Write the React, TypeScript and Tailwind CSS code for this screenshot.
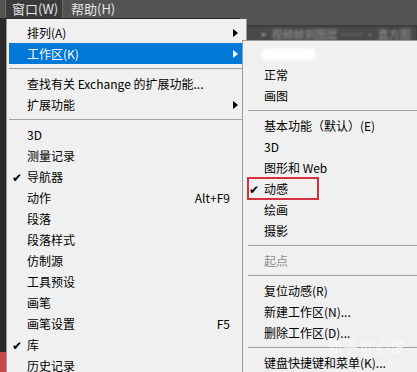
import React from 'react';

type Item =
  | { kind: 'sep' }
  | { kind: 'item'; label: string; check?: boolean; shortcut?: string; arrow?: boolean; active?: boolean; disabled?: boolean; boxed?: boolean; blurred?: boolean };

const mainMenu: Item[] = [
  { kind: 'item', label: '排列(A)', arrow: true },
  { kind: 'item', label: '工作区(K)', arrow: true, active: true },
  { kind: 'sep' },
  { kind: 'item', label: '查找有关 Exchange 的扩展功能...' },
  { kind: 'item', label: '扩展功能', arrow: true },
  { kind: 'sep' },
  { kind: 'item', label: '3D' },
  { kind: 'item', label: '测量记录' },
  { kind: 'item', label: '导航器', check: true },
  { kind: 'item', label: '动作', shortcut: 'Alt+F9' },
  { kind: 'item', label: '段落' },
  { kind: 'item', label: '段落样式' },
  { kind: 'item', label: '仿制源' },
  { kind: 'item', label: '工具预设' },
  { kind: 'item', label: '画笔' },
  { kind: 'item', label: '画笔设置', shortcut: 'F5' },
  { kind: 'item', label: '库', check: true },
  { kind: 'item', label: '历史记录' },
];

const subMenu: Item[] = [
  { kind: 'item', label: '', blurred: true },
  { kind: 'item', label: '正常' },
  { kind: 'item', label: '画图' },
  { kind: 'sep' },
  { kind: 'item', label: '基本功能（默认）(E)' },
  { kind: 'item', label: '3D' },
  { kind: 'item', label: '图形和 Web' },
  { kind: 'item', label: '动感', check: true, boxed: true },
  { kind: 'item', label: '绘画' },
  { kind: 'item', label: '摄影' },
  { kind: 'sep' },
  { kind: 'item', label: '起点', disabled: true },
  { kind: 'sep' },
  { kind: 'item', label: '复位动感(R)' },
  { kind: 'item', label: '新建工作区(N)...' },
  { kind: 'item', label: '删除工作区(D)...' },
  { kind: 'sep' },
  { kind: 'item', label: '键盘快捷键和菜单(K)...' },
];

const Arrow = ({ light }: { light?: boolean }) => (
  <svg width="5" height="8" viewBox="0 0 5 8">
    <polygon points="0,0 5,4 0,8" fill={light ? '#ffffff' : '#000000'} />
  </svg>
);

const Sep = ({ inset }: { inset?: boolean }) => (
  <div className={`h-[9px] flex items-center ${inset ? 'pl-[5px]' : ''}`}>
    <div className="h-px w-full bg-[#a0a0a0]" />
  </div>
);

const MainRow = ({ item }: { item: Item }) => {
  if (item.kind === 'sep') return <Sep />;
  return (
    <div
      className={`h-[21px] flex items-center pl-[3px] ${
        item.active ? 'bg-[#0078d7] text-white' : 'text-black'
      }`}
    >
      <span className="w-[15px] text-[12px] leading-none">{item.check ? '✔' : ''}</span>
      <span className="flex-1 whitespace-nowrap">{item.label}</span>
      {item.shortcut && <span className="whitespace-nowrap">{item.shortcut}</span>}
      <div className="w-[14px] flex justify-end pr-[6px]">{item.arrow && <Arrow light={item.active} />}</div>
    </div>
  );
};

const SubRow = ({ item }: { item: Item }) => {
  if (item.kind === 'sep') return <Sep inset />;
  return (
    <div className={`h-[21px] flex items-center pl-[4px] ${item.disabled ? 'text-[#8c8c8c]' : 'text-black'}`}>
      <div
        className={`flex items-center border-2 ${
          item.boxed ? 'h-[23px] w-[72px] border-[#d3313d]' : 'h-[21px] border-transparent'
        }`}
      >
        <span className="w-[15px] text-[12px] leading-none">{item.check ? '✔' : ''}</span>
        {item.blurred ? (
          <div className="ml-[-3px] h-[12px] w-[55px] rounded-full bg-white blur-[1.5px]" />
        ) : (
          <span className="whitespace-nowrap">{item.label}</span>
        )}
      </div>
    </div>
  );
};

export default function App() {
  return (
    <div
      className="relative w-[417px] h-[372px] overflow-hidden bg-[#2a2a2a] text-[12px] flex flex-col"
      style={{ fontFamily: '"Noto Sans CJK SC", "Noto Sans", sans-serif' }}
    >
      {/* top menubar */}
      <div className="h-[18px] shrink-0 bg-[#535353] flex items-stretch text-[#e6e6e6] text-[13px] leading-[18px]">
        <div className="ml-[5px] w-[58px] bg-[#3b3b3b] border-x border-[#6a6a6a] pl-[6px] whitespace-nowrap">窗口(W)</div>
        <div className="ml-[8px] whitespace-nowrap">帮助(H)</div>
      </div>

      {/* workspace behind the menus */}
      <div className="flex-1 flex">
        <div className="w-[240px] flex flex-col justify-end">
          <div className="w-[6px] h-[20px] bg-[#c44a4a]" />
        </div>
        <div className="flex-1 flex flex-col">
          <div className="h-[8px] bg-[#535353] border-b border-[#3a3a3a]" />
          <div className="h-[16px] bg-[#4a4a4a] pl-[18px] text-[11px] leading-[16px] text-[#9a9a9a] blur-[1px] whitespace-nowrap overflow-hidden">
            ▪ 视频帧到图层 ── ‧ 直方图
          </div>
        </div>
      </div>

      {/* main menu */}
      <div className="absolute left-[6px] top-[19px] w-[241px] bottom-0 bg-[#f0f0f0] border-l border-r border-[#9a9a9a] pt-[3px] px-[2px]">
        {mainMenu.map((it, i) => (
          <MainRow key={i} item={it} />
        ))}
      </div>

      {/* submenu */}
      <div className="absolute left-[242px] top-[40px] right-0 bottom-0 bg-[#f0f0f0] border-l border-t border-[#9a9a9a] pt-[2px]">
        {subMenu.map((it, i) => (
          <SubRow key={i} item={it} />
        ))}
      </div>

      {/* watermark */}
      <div className="absolute right-[12px] bottom-[15px] text-[15px] text-white/60 whitespace-nowrap">知乎 @心俊</div>
    </div>
  );
}
